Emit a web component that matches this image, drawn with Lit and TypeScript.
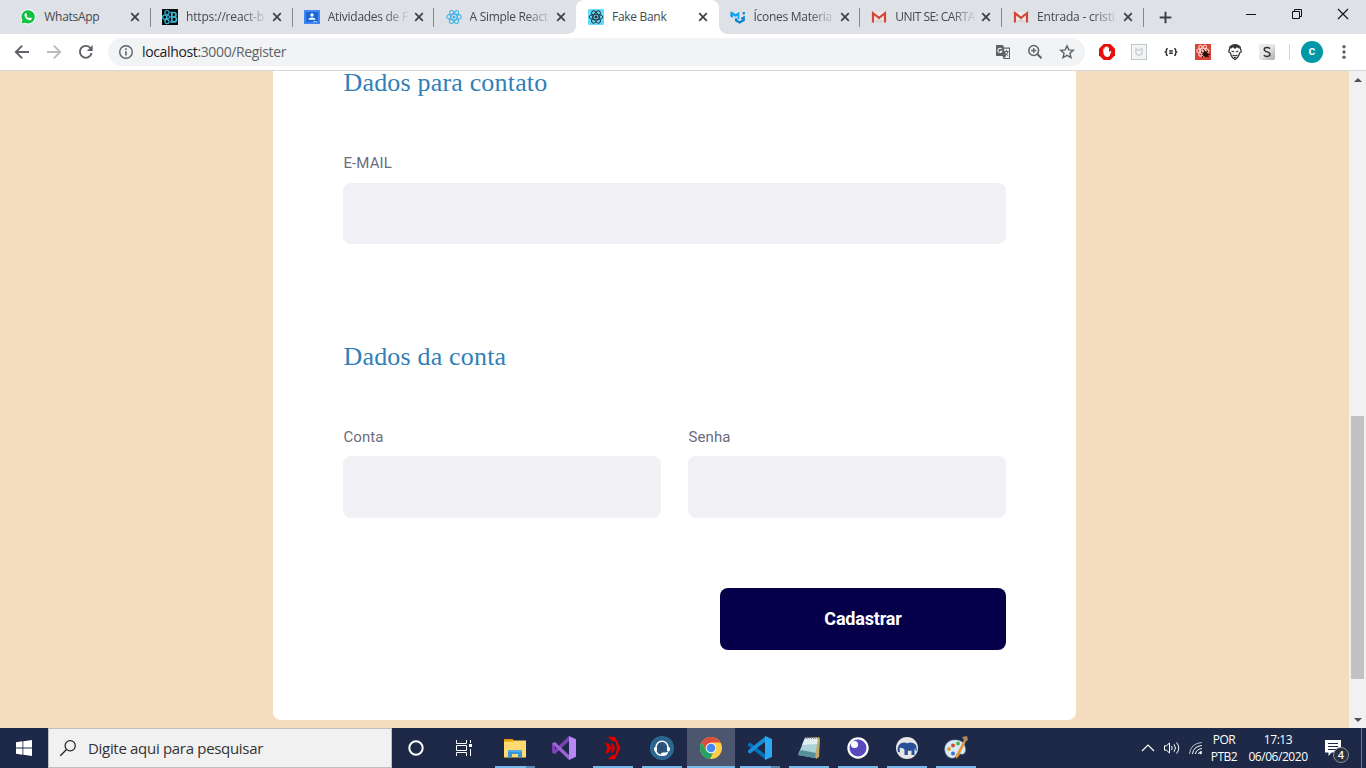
import { LitElement, html, svg, css, nothing } from "lit";
import { customElement, property } from "lit/decorators.js";
import { classMap } from "lit/directives/class-map.js";
import { styleMap } from "lit/directives/style-map.js";

const atom = (stroke: string, w = 1.1) => svg`
  <g fill="none" stroke=${stroke} stroke-width=${w}>
    <ellipse cx="8" cy="8" rx="7.2" ry="2.9"/>
    <ellipse cx="8" cy="8" rx="7.2" ry="2.9" transform="rotate(60 8 8)"/>
    <ellipse cx="8" cy="8" rx="7.2" ry="2.9" transform="rotate(120 8 8)"/>
  </g><circle cx="8" cy="8" r="1.5" fill=${stroke}/>`;

const gmail = svg`
  <path d="M1 3h14v10.500H1z" fill="#eceaea"/><path d="M3 13.500 8 8.500l5 5z" fill="#d9d6d5"/>
  <path d="M2 13.500V4.200L8 8.800l6-4.600v9.300" fill="none" stroke="#d54636" stroke-width="2.200"/>`;

const art: Record<string, unknown> = {
  whatsapp: svg`<path d="M.2 15.800 1.500 11.500A7.600 7.600 0 1 1 4.700 14.600z" fill="#fff"/>
    <path d="M1.400 14.600 2.400 11.300A6.700 6.700 0 1 1 4.900 13.700z" fill="#12c143"/>
    <path d="M5.300 4.300c.6-.5 1.100-.2 1.300.5l.4 1c.1.500-.6.900-.5 1.200.5 1 1.400 1.800 2.400 2.200.4.100.8-.9 1.300-.7l1.500.8c.4.400-.1 1.700-1.200 2-1.700.4-4.500-1.300-5.500-3.300-.7-1.300-.6-2.900.3-3.700z" fill="#fff"/>`,
  reactb: svg`<path d="M0 0h16v16H0z" fill="#050a0c"/><g fill="none" stroke="#37b9d6" stroke-width="1.200"><circle cx="5" cy="3.600" r="2.100"/><circle cx="2.700" cy="8.300" r="2.100"/><circle cx="5" cy="12.500" r="2.100"/><circle cx="6" cy="8" r="1.500"/><path d="M8.300 3.500h3.500a2.200 2.200 0 0 1 0 4.400H8.300m1.600-4.400v9.400m-1.600 0h3.700a2.500 2.500 0 0 0 0-5" stroke-width="1.700"/></g>`,
  classroom: svg`<path d="M0 1h16v14H0z" fill="#4285f4"/><path d="M2 3h12v10H2z" fill="#1967d2"/><circle cx="8" cy="6" r="1.700" fill="#fff"/><path d="M4.500 10.800c0-3 7-3 7 0z" fill="#fff"/><path d="M9 12h4v1H9z" fill="#9cc0fa"/>`,
  react: atom("#42b4e8"),
  fake: svg`<rect width="16" height="16" rx="1.500" fill="#61dafb"/><g transform="translate(.4 .4) scale(.95)">${atom("#22333b", 1)}</g>`,
  material: svg`<path d="M.3 3.200 1.800 2.600 5.600 5.200 9.300 2.700v7.100L7.600 10.800V6.500l-2 1.400-2.500-1.600v2.800L.3 7.500z" fill="#12a1ec"/><path d="M6 9.200v2.300l3.600 2 4.200-2.300V8.400l-2.600 1.400m2.600-4.400V3" fill="none" stroke="#0b80d2" stroke-width="2.100"/>`,
  gmail,
  close: svg`<path d="m4.200 4.200 7.600 7.600m0-7.600-7.600 7.600" stroke="#3c4043" stroke-width="1.700"/>`,
  plus: svg`<path d="M8 1.800v12.400M1.800 8h12.400" stroke="#3c4043" stroke-width="2.100"/>`,
  back: svg`<path d="M15 8H2m6.200-6.400L1.800 8l6.400 6.400" fill="none" stroke="#5f6368" stroke-width="1.900"/>`,
  forward: svg`<path d="M1 8h13M7.800 1.600 14.200 8l-6.400 6.400" fill="none" stroke="#babcbe" stroke-width="1.900"/>`,
  reload: svg`<path d="M13.600 9A5.900 5.900 0 1 1 12.600 4.300" fill="none" stroke="#5f6368" stroke-width="1.900"/><path d="M14.700 1v6H8.900z" fill="#5f6368"/>`,
  info: svg`<circle cx="8" cy="8" r="6.300" fill="none" stroke="#5f6368" stroke-width="1.400"/><path d="M7.200 7.200h1.600v4.200H7.200zM7.200 4.300h1.600v1.600H7.200z" fill="#5f6368"/>`,
  translate: svg`<path d="M1 1h7l1 2.500h6V15H8.500l-.9-3H1z" fill="#5f6368"/><path d="M8.700 4.700H14V14H9.200l2-2z" fill="#f1f3f4"/><path d="M6.600 5a2.100 2.100 0 1 0 .3 2.300H5" fill="none" stroke="#f1f3f4" stroke-width="1.100"/><path d="M9.500 7.500h4M11.500 6v1.500m1.500 0c-.4 2-2 3.300-3 4m.4-3c.6 1.400 1.500 2.300 2.800 3.200" fill="none" stroke="#5f6368"/>`,
  zoom: svg`<circle cx="6.700" cy="6.500" r="4.900" fill="none" stroke="#5f6368" stroke-width="1.500"/><path d="m10.200 10 4.300 4.200" stroke="#5f6368" stroke-width="2"/><path d="M4.200 6.500h5M6.700 4v5" stroke="#5f6368" stroke-width="1.300"/>`,
  star: svg`<path d="m8 1.900 1.800 4 4.500.4-3.400 2.900 1.100 4.400L8 11.300l-4 2.300 1.100-4.400L1.700 6.300l4.500-.4z" fill="none" stroke="#5f6368" stroke-width="1.400"/>`,
  adblock: svg`<path d="M4.700 0h6.600L16 4.700v6.600L11.300 16H4.700L0 11.300V4.700z" fill="#e60f0c"/><path d="M4.300 8V4.700q.7-.9 1.300 0V3.200q.7-1 1.500 0V2.800q.8-.9 1.500 0v1q.8-.9 1.400 0v4.500l1.200-1.200q1.100-.3 1 .6L10.600 12q-2.300 1.900-4.800 0-1.500-1.400-1.500-4z" fill="#fff"/>`,
  shield: svg`<rect x=".5" y=".5" width="15" height="15" fill="#f3f5f6" stroke="#bfc8cc"/><path d="M5 4.700 8 6.300l3-1.600v5L8 11.500 5 9.700z" fill="none" stroke="#cfd5d8" stroke-width="1.700"/>`,
  braces: svg`<g fill="none" stroke="#2b2b2b" stroke-width="1.400"><path d="M4.800 4.700h-.5q-.9 0-.9.900v1.600L2.300 8l1.100.8v1.600q0 .9.900.9h.5M11.200 4.700h.5q.9 0 .9.900v1.600l1.100.8-1.100.8v1.600q0 .9-.9.900h-.5M6.200 7h3.600M6.200 9.200h3.600"/></g>`,
  bug: svg`<path d="M0 0h16v16H0z" fill="#da4436"/><g transform="translate(1 0) scale(.84)">${atom("#f7d1c9", 1.4)}</g><ellipse cx="10.500" cy="10.500" rx="2.400" ry="3" fill="#26100e" transform="rotate(-25 10 10)"/><path d="m6 8 8 5M7 13l6-6m-6 3.500h8M8.500 5.500l2 3" stroke="#26100e" stroke-width=".9"/>`,
  face: svg`<path d="M3 2.700Q8-1.600 13 2.700L14.300 8l-1.700.8Q12 13 8 15.500 4 13 3.400 8.800L1.700 8z" fill="#fff" stroke="#333" stroke-width="1.200"/><path d="M3 3Q8-2 13 3l-.6 2L10 3.300 8 5 6 3.300 3.600 5z" fill="#333"/><path d="m4.600 7 2.500 1M11.400 7 8.900 8M5.500 11q2.500 1.600 5 0M7 13.500h2" fill="none" stroke="#333" stroke-width="1.100"/>`,
  stylish: svg`<defs><linearGradient id="m" x2="1" y2="1"><stop stop-color="#eee"/><stop offset=".5" stop-color="#e4e4e4"/><stop offset="1" stop-color="#aaa"/></linearGradient></defs><rect width="16" height="16" rx="2" fill="url(#m)"/><path d="M11 4.700C9.500 2.900 5.200 3 5.200 5.500c0 3 5.800 1.800 5.800 4.800 0 2.600-4.600 2.800-6.200.8" fill="none" stroke="#333" stroke-width="1.400"/>`,
  dots: svg`<circle cx="8" cy="2.800" r="1.700" fill="#5f6368"/><circle cx="8" cy="8" r="1.700" fill="#5f6368"/><circle cx="8" cy="13.200" r="1.700" fill="#5f6368"/>`,
  minimize: svg`<path d="M3 8.500h10" stroke="#111"/>`,
  restore: svg`<path d="M3.500 5.500h7v7h-7zM5.500 5.500v-2h7v7h-2" fill="none" stroke="#111"/>`,
  quit: svg`<path d="m3 3 10 10m0-10L3 13" stroke="#111" stroke-width="1.100"/>`,
  windows: svg`<path d="M0 2.200 6.500 1.300v6.300H0zM7.300 1.200 16 0v7.600H7.300zM0 8.400h6.500v6.300L0 13.800zM7.300 8.400H16V16l-8.700-1.200z" fill="#fff"/>`,
  search: svg`<circle cx="10.200" cy="5.800" r="5.100" fill="none" stroke="#222" stroke-width="1.200"/><path d="M6.500 9.500.3 15.700" stroke="#222" stroke-width="1.300"/>`,
  cortana: svg`<circle cx="8" cy="8" r="6.700" fill="none" stroke="#fff" stroke-width="2"/>`,
  taskview: svg`<path d="M.5 0v3.500h10V0M.5 16v-3.500h10V16M.5 5.500h10v5H.5zM14.500 0v3m0 6v7" fill="none" stroke="#fff"/><path d="M13 4h3v3h-3z" fill="#fff"/>`,
  explorer: svg`<path d="M1 3.500h8l2 1h12v17H1z" fill="#ffd767"/><path d="M1 3h9v2.500H1z" fill="#e4a000"/><path d="M1 6h22v14H1z" fill="#ffda70"/><path d="M5 21v-7h14v7h-4v-3H9v3z" fill="#3595d9"/><path d="M5 14h14v2H5z" fill="#51ace5"/>`,
  vs: svg`<path d="M0 7.500 3 6v12l-3-1.500z" fill="#7a3fb5"/><path d="m3 18 14-13V0L0 16.500z" fill="#7c42b8"/><path d="M3 6 17 19v5L0 7.500z" fill="#9b62d2"/><path d="M17 0 24 3.200v17.600L17 24z" fill="#b987f4"/>`,
  redhat: svg`<path d="M6.500.7H14L19.500 12 14 23.300H6.500L12 18.500h2.500L16 12l-1.500-6.500H12z" fill="#e00000"/><path d="M4 6.500q5 .5 6.500 5.500Q9 17 4 17.800l2.200-5.800zM9.500 6.500q4 1.500 4.500 5.500-.5 4-4.500 5.500l2-5.500z" fill="#d90000"/>`,
  headset: svg`<defs><radialGradient id="h"><stop stop-color="#2a4b6b"/><stop offset="1" stop-color="#2b6c98"/></radialGradient></defs><circle cx="12" cy="12" r="12" fill="url(#h)"/><path d="M6 12C5.500 3 18.500 3 18 12" fill="none" stroke="#fff" stroke-width="1.500"/><rect x="4" y="11" width="3" height="4.500" rx="1.400" fill="#fff"/><rect x="17" y="11" width="3" height="4.500" rx="1.400" fill="#fff"/><path d="M5.500 14.500q1.500 5 7 4.800" fill="none" stroke="#fff" stroke-width="1.600"/><path d="M11 17.200q1.500-1.200 3.500-.6 2.500 0 4-1.600-1 5.200-5.500 5-2-.3-2-2.800z" fill="#fff"/>`,
  chrome: svg`<circle cx="12" cy="12" r="11" fill="#ffce44"/><path d="M2.500 6.500A11 11 0 0 1 21.500 6.500H12L7.200 14.700z" fill="#dc4c3f"/><path d="M2.500 6.500 7.200 14.800l4.800 2.700 2-.4L11 23A11 11 0 0 1 2.500 6.500z" fill="#1fa463"/><circle cx="12" cy="12" r="5.300" fill="#f4f4f4"/><circle cx="12" cy="12" r="4.300" fill="#4687f4"/>`,
  vscode: svg`<path d="m0 8 2-1.500L18 19v5L0 9.500z" fill="#0071bd"/><path d="m0 16 2 1.700L18 5V0L0 14.500z" fill="#168fda"/><path d="m17 0 7 3v18l-7 3z" fill="#2aa8f4"/>`,
  notepad: svg`<path d="m8 2 14-1 1 2-1 18-3 2z" fill="#c6a867"/><path d="M8 2h13l-3 20-17-3z" fill="#a9d3d6"/><path d="M8 2h13l-1 6L5 9z" fill="#dfeef0"/><path d="m1 19 17 3 1-5-15-3z" fill="#568f98"/><path d="M8 2h14" stroke="#888" stroke-dasharray="1 1" stroke-width="2"/>`,
  insomnia: svg`<circle cx="12" cy="12" r="10.700" fill="#fff"/><circle cx="12" cy="12" r="8.500" fill="#5849be"/><circle cx="8.500" cy="8.500" r="3.600" fill="#fff"/>`,
  elephant: svg`<circle cx="12" cy="12" r="11" fill="#e6e6e6"/><path d="M2.500 13.500Q3 8 7.500 6.800q2.500-.9 4.500.4 5.500-1.700 8.500 1.300 1.700 2 1.300 6.500l-1.300-.5-.2-3-.8 2.500V19h-3v-4.500q-2 .8-3.700 0V19H9.500v-5.500l-2-1.500-2.800-.3q-.2 2.300.3 4.300-2.300 1.200-2.500-2.500z" fill="#294f97"/>`,
  paint: svg`<path d="M11 4C3 4 0 10 1 15c1 7 9 9 11 5 1-3 2-3 5-2 4 1 5-3 4-7-1-5-5-7-10-7z" fill="#d9ebf7" stroke="#91b5cf" stroke-width=".6"/><circle cx="5" cy="13" r="2" fill="#e0a334"/><circle cx="9" cy="9.500" r="2" fill="#d94b34"/><circle cx="14" cy="7.500" r="2" fill="#50b450"/><circle cx="9" cy="17.500" r="2" fill="#3b74ca"/><path d="m20 4 2 1-7 15-3 3v-4z" fill="#e8953b"/><path d="m18 1 5-1 1 4-3 2z" fill="#b1845b"/>`,
  chevron: svg`<path d="m2 11 6-6 6 6" fill="none" stroke="#fff" stroke-width="1.200"/>`,
  sound: svg`<path d="M.5 5.800h2L5.500 3v10l-3-2.800h-2z" fill="none" stroke="#fff"/><path d="M7.500 6q1.500 2 0 4M10 4.300q3 3.700 0 7.400M12.600 2.500q4.300 5.500 0 11" fill="none" stroke="#fff"/>`,
  wifi: svg`<g fill="none" stroke="#fff"><path d="M1.500 14Q2.500 3.500 13.800 2.500" stroke="#b9bfcb"/><path d="M4.500 14q.7-7.500 9.300-8.500M7.500 14q.6-4.700 6.300-5.500M10.300 14q.5-2 3.500-2.600"/></g><circle cx="12.700" cy="13" r="1.200" fill="#fff"/>`,
  notice: svg`<path d="M0 0h16v12.500H6.500L3.500 16v-3.500H0z" fill="#fff"/><path d="M3 3.500h10M3 6.500h10M3 9.500h10" stroke="#1c2a4a"/>`,
};

@customElement("ui-icon")
class UiIcon extends LitElement {
  static styles = css`:host{display:block;flex:none}svg{display:block;overflow:visible}`;
  @property() name = "";
  @property({ type: Number }) size = 16;
  @property({ type: Number }) box = 16;
  render() {
    return html`<svg width=${this.size} height=${this.size} viewBox="0 0 ${this.box} ${this.box}">${art[this.name] ?? nothing}</svg>`;
  }
}

const tabs = [
  { icon: "whatsapp", title: "WhatsApp", spacing: -0.3 },
  { icon: "reactb", title: "https://react-b", spacing: -0.17, fade: true },
  { icon: "classroom", title: "Atividades de F", spacing: -0.28, fade: true },
  { icon: "react", title: "A Simple React", spacing: -0.3, fade: true },
  { icon: "fake", title: "Fake Bank", spacing: -0.3, active: true },
  { icon: "material", title: "Ícones Materia", spacing: -0.28, fade: true },
  { icon: "gmail", title: "UNIT SE: CARTA", spacing: -0.55, fade: true },
  { icon: "gmail", title: "Entrada - cristi", spacing: -0.2, fade: true },
];

@customElement("browser-bar")
class BrowserBar extends LitElement {
  static styles = css`
    :host { display: block; font-family: "Open Sans", "Noto Sans", sans-serif; }
    .strip { height: 34px; background: #dee1e6; display: flex; padding-left: 9px; box-sizing: border-box; }
    .tab { width: 141.750px; height: 34px; box-sizing: border-box; display: flex; align-items: center; padding: 0 7.500px 0 11.300px; position: relative; flex: none; }
    .tab.sep::after { content: ""; position: absolute; right: 0; top: 8px; width: 1px; height: 19px; background: #85888d; }
    .tab.active { background: #fff; border-radius: 8px 8px 0 0; width: 142.750px; padding-left: 12px; padding-right: 8px; margin-right: -.500px; }
    .tab.active::before, .tab.active::after { content: ""; position: absolute; bottom: 0; width: 8px; height: 8px; }
    .tab.active::before { left: -8px; background: radial-gradient(circle at 0 0, transparent 7.500px, #fff 8px); }
    .tab.active::after { right: -8px; background: radial-gradient(circle at 100% 0, transparent 7.500px, #fff 8px); }
    .title { margin-left: 8px; flex: 1; min-width: 0; white-space: nowrap; font-size: 12px; line-height: 18px; color: #45494d; }
    .title.fade { -webkit-mask-image: linear-gradient(90deg, #000 56px, transparent 82px); }
    .plus { padding: 10px 0 0 14px; }
    .controls { margin-left: auto; display: flex; gap: 30px; padding: 6px 15px 0 0; }
    .bar { height: 37px; box-sizing: border-box; background: #fff; border-bottom: 1px solid #d5d7da; display: flex; align-items: center; padding: 0 13px 0 14px; }
    .nav { display: flex; gap: 16px; width: 94px; }
    .omni { width: 977px; height: 28px; border-radius: 14px; background: #f1f3f4; display: flex; align-items: center; padding: 0 10px; box-sizing: border-box; }
    .url { margin-left: 8px; font-size: 14px; letter-spacing: -.36px; color: #5f6368; flex: 1; line-height: 20px; }
    .host { color: #202124; }
    .actions { display: flex; gap: 16px; }
    .ext { display: flex; gap: 16px; margin-left: 14px; }
    .rule { width: 1px; height: 16px; background: #d3d6d9; margin: 0 11px 0 14px; }
    .avatar { width: 22px; height: 22px; border-radius: 50%; background: #0097a7; color: #fff; font: 500 13px/20px Roboto, sans-serif; text-align: center; margin-right: 13px; }
  `;
  render() {
    return html`
      <div class="strip">
        ${tabs.map((t, i) => html`
          <div class=${classMap({ tab: true, active: !!t.active, sep: !t.active && !tabs[i + 1]?.active })}>
            <ui-icon name=${t.icon}></ui-icon>
            <span class=${classMap({ title: true, fade: !!t.fade })} style=${styleMap({ letterSpacing: t.spacing + "px" })}>${t.title}</span>
            <ui-icon name="close"></ui-icon>
          </div>`)}
        <div class="plus"><ui-icon name="plus" size="15"></ui-icon></div>
        <div class="controls"><ui-icon name="minimize"></ui-icon><ui-icon name="restore"></ui-icon><ui-icon name="quit"></ui-icon></div>
      </div>
      <div class="bar">
        <div class="nav"><ui-icon name="back"></ui-icon><ui-icon name="forward"></ui-icon><ui-icon name="reload"></ui-icon></div>
        <div class="omni">
          <ui-icon name="info"></ui-icon>
          <div class="url"><span class="host">localhost</span>:3000/Register</div>
          <div class="actions"><ui-icon name="translate"></ui-icon><ui-icon name="zoom"></ui-icon><ui-icon name="star"></ui-icon></div>
        </div>
        <div class="ext">${["adblock", "shield", "braces", "bug", "face", "stylish"].map((n) => html`<ui-icon name=${n}></ui-icon>`)}</div>
        <div class="rule"></div>
        <div class="avatar">c</div>
        <ui-icon name="dots"></ui-icon>
      </div>`;
  }
}

@customElement("register-page")
class RegisterPage extends LitElement {
  static styles = css`
    :host { display: flex; height: 657px; overflow: hidden; background: #f4ddbf; font-family: Roboto, sans-serif; }
    .view { flex: 1; display: flex; justify-content: center; align-items: flex-start; }
    .card { width: 803px; height: 649px; box-sizing: border-box; background: #fff; border-radius: 0 0 8px 8px; padding: 0 70px; display: flex; flex-direction: column; }
    h2 { margin: 0; padding-left: .5px; font: 400 26px/24px "Liberation Serif", serif; color: #3180b8; letter-spacing: .18px; }
    .contact { padding-bottom: 3px; }
    .account { margin-top: 101px; padding-bottom: 3px; }
    .row { display: flex; gap: 27px; margin-top: 55px; }
    .field { flex: 1; display: flex; flex-direction: column; }
    label { padding-left: .5px; font-size: 15px; line-height: 20px; color: #6c6c80; letter-spacing: .08px; }
    input { margin-top: 10px; height: 61px; box-sizing: border-box; border: 0; border-radius: 8px; background: #f0f0f5; padding: 0 24px; outline: none; }
    .pair input { margin-top: 9px; height: 62px; }
    button { align-self: flex-end; margin-top: 70px; width: 286px; height: 62px; border: 0; border-radius: 8px; background: #06004b; color: #fff; font: 700 18px Roboto, sans-serif; letter-spacing: -.18px; padding: 0 0 2px; }
    .scroll { width: 17px; background: #f1f1f1; display: flex; flex-direction: column; align-items: center; }
    .arrow { height: 17px; display: flex; align-items: center; }
    .up { border: 4px solid transparent; border-top: 0; border-bottom: 4px solid #505050; }
    .down { border: 4px solid transparent; border-bottom: 0; border-top: 4px solid #505050; }
    .thumb { width: 13px; height: 263px; background: #c1c1c1; margin: 328px 0 auto; }
  `;
  render() {
    return html`
      <main class="view">
        <form class="card">
          <h2 class="contact">Dados para contato</h2>
          <div class="row"><div class="field"><label>E-MAIL</label><input type="email" /></div></div>
          <h2 class="account">Dados da conta</h2>
          <div class="row pair">
            <div class="field"><label>Conta</label><input /></div>
            <div class="field"><label>Senha</label><input type="password" /></div>
          </div>
          <button type="button">Cadastrar</button>
        </form>
      </main>
      <div class="scroll">
        <div class="arrow"><div class="up"></div></div>
        <div class="thumb"></div>
        <div class="arrow"><div class="down"></div></div>
      </div>`;
  }
}

const apps = [
  { icon: "explorer", line: 31, more: true }, { icon: "vs", line: 0 }, { icon: "redhat", line: 40 },
  { icon: "headset", line: 40 }, { icon: "chrome", line: 48, active: true }, { icon: "vscode", line: 31, more: true },
  { icon: "notepad", line: 40 }, { icon: "insomnia", line: 40 }, { icon: "elephant", line: 40 }, { icon: "paint", line: 40 },
];

@customElement("task-bar")
class TaskBar extends LitElement {
  static styles = css`
    :host { display: flex; height: 40px; background: #1d2946; color: #fff; font-family: "Open Sans", "Noto Sans", sans-serif; }
    .cell { width: 48px; display: grid; place-items: center; }
    .search { width: 344px; box-sizing: border-box; background: #f1f1f1; border: 1px solid #bfbfbf; display: flex; align-items: center; padding-left: 11px; color: #333; font-size: 15px; letter-spacing: -.31px; gap: 12px; }
    .apps { display: flex; gap: 1px; margin-left: 3px; }
    .app { width: 48px; display: flex; flex-direction: column; align-items: center; }
    .app.active { background: #4c566e; }
    .pic { height: 38px; padding-top: 2px; box-sizing: border-box; display: grid; place-items: center; }
    .lines { display: flex; height: 2px; }
    .line { background: #76b9ed; }
    .more { width: 9px; background: #5789b2; }
    .tray { margin-left: auto; display: flex; align-items: center; font-size: 12px; line-height: 17px; text-align: center; letter-spacing: -.5px; }
    .icons { display: flex; gap: 8px; }
    .lang { width: 40px; padding-bottom: 1px; }
    .clock { width: 68px; padding-bottom: 1px; letter-spacing: -.45px; }
    .notice { position: relative; margin: 0 20px 0 13px; }
    .badge { position: absolute; left: 8px; top: 7px; width: 14px; height: 14px; border: 1px solid #8d929c; border-radius: 50%; background: #2a303c; font-size: 11px; line-height: 14px; font-weight: 600; letter-spacing: 0; }
    .peek { width: 1px; align-self: stretch; background: #6f788c; margin-right: 4px; }
  `;
  render() {
    return html`
      <div class="cell"><ui-icon name="windows"></ui-icon></div>
      <div class="search"><ui-icon name="search"></ui-icon><span>Digite aqui para pesquisar</span></div>
      <div class="cell"><ui-icon name="cortana"></ui-icon></div>
      <div class="cell"><ui-icon name="taskview"></ui-icon></div>
      <div class="apps">
        ${apps.map((a) => html`
          <div class=${classMap({ app: true, active: !!a.active })}>
            <div class="pic"><ui-icon name=${a.icon} box="24" size="24"></ui-icon></div>
            <div class="lines"><div class="line" style=${styleMap({ width: a.line + "px" })}></div>${a.more ? html`<div class="more"></div>` : nothing}</div>
          </div>`)}
      </div>
      <div class="tray">
        <div class="icons"><ui-icon name="chevron"></ui-icon><ui-icon name="sound"></ui-icon><ui-icon name="wifi"></ui-icon></div>
        <div class="lang">POR<br />PTB2</div>
        <div class="clock">17:13<br />06/06/2020</div>
        <div class="notice"><ui-icon name="notice"></ui-icon><div class="badge">4</div></div>
        <div class="peek"></div>
      </div>`;
  }
}

@customElement("app-root")
class AppRoot extends LitElement {
  static styles = css`:host { display: block; width: 1366px; height: 768px; overflow: hidden; }`;
  render() {
    return html`<browser-bar></browser-bar><register-page></register-page><task-bar></task-bar>`;
  }
}
